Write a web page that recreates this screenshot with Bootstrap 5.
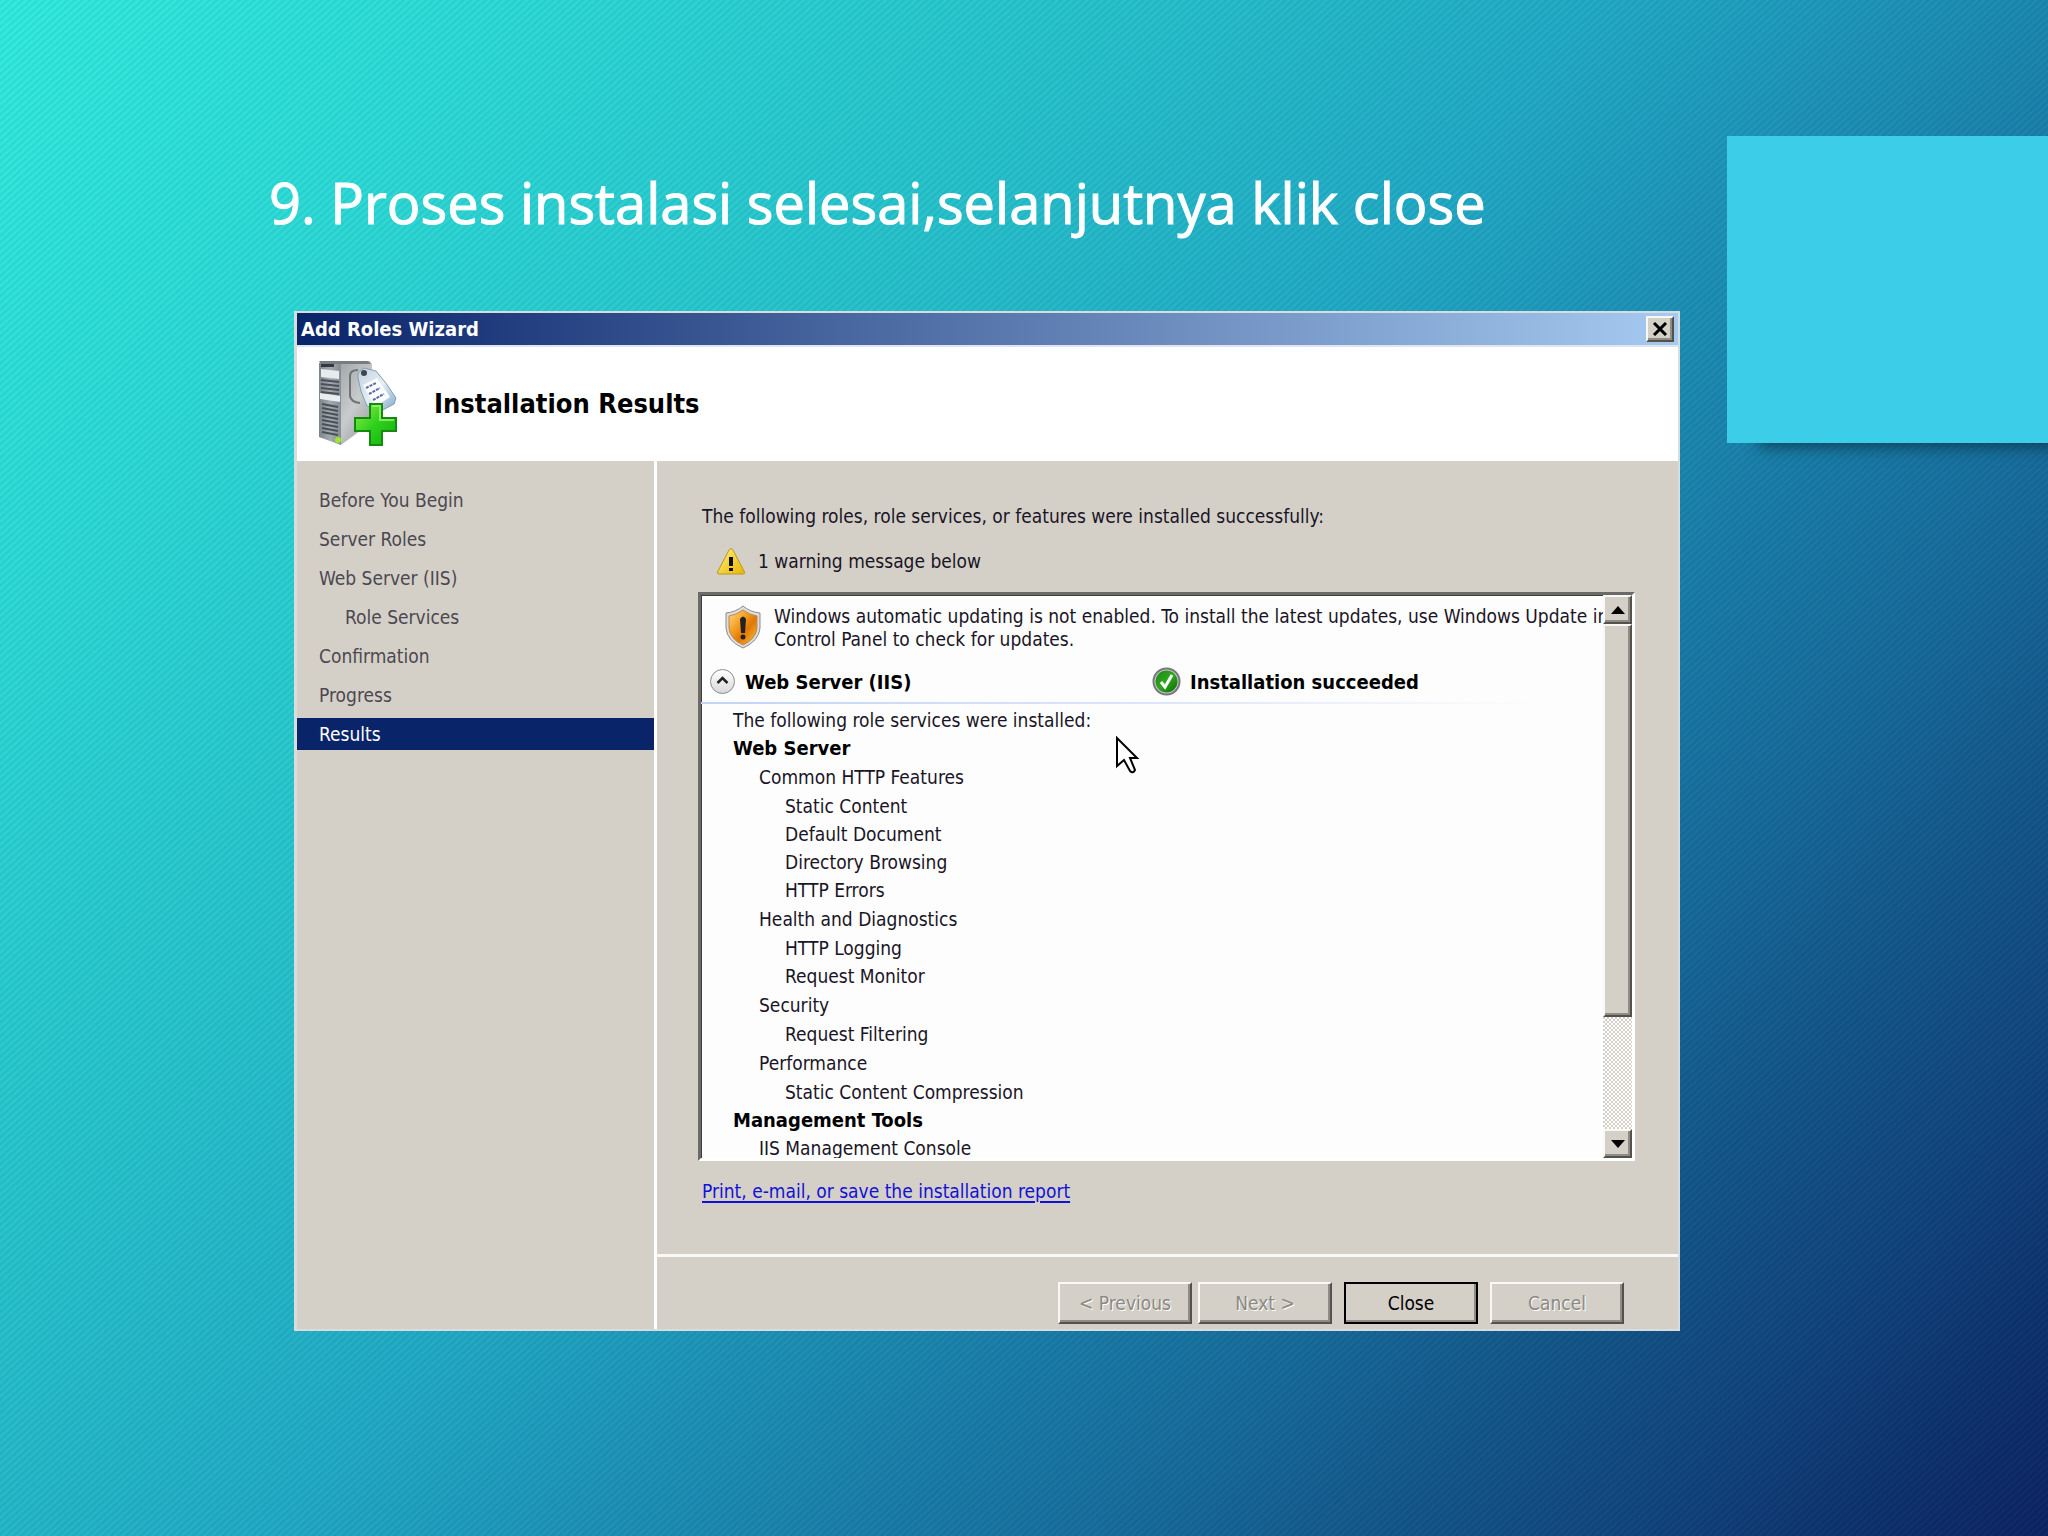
<!DOCTYPE html>
<html lang="id">
<head>
<meta charset="utf-8">
<meta name="viewport" content="width=device-width, initial-scale=1">
<title>Add Roles Wizard</title>
<link href="https://cdn.jsdelivr.net/npm/bootstrap@5.3.0/dist/css/bootstrap.min.css" rel="stylesheet">
<style>
  :root { --face: #d4d0c8; --navy: #0a246a; }
  body {
    min-height: 100vh;
    font-family: "DejaVu Sans Condensed", "DejaVu Sans", sans-serif;
    font-size: 19px;
    line-height: 28px;
    color: #1a1526;
    background:
      repeating-linear-gradient(138deg, rgba(0,80,110,.10) 0, rgba(0,80,110,.02) 2px, rgba(255,255,255,.04) 3px, rgba(0,80,110,.10) 5px),
      linear-gradient(131deg, #30ecde 0%, #2bd8d4 17%, #25c0ca 34%, #20a8c4 48%, #1c92b6 56%, #187ba6 65%, #156898 73%, #125488 80%, #0f4079 88%, #0c2e6a 94%, #0b1f60 100%);
  }
  .slide { grid-template-columns: 269fr 25fr 1386fr 47fr 321fr; grid-template-rows: auto auto; align-items: start; }
  .slide-title {
    grid-area: 1 / 2 / 2 / 4;
    padding: 166px 0 73px;
    font-family: "Open Sans", "Noto Sans", sans-serif;
    font-size: 56px; line-height: 72px; font-weight: 400; color: #fff;
    -webkit-text-stroke: 1px #fff;
  }
  .accent-block { grid-area: 1 / 5 / 3 / 6; margin-top: 136px; height: 307px; background: #3ccde9; box-shadow: 22px 14px 14px -10px rgba(10,50,70,.75); }
  .wizard { grid-area: 2 / 3 / 3 / 4; min-width: 0; background: var(--face); border: 2px solid #d9dcdc; border-left-width: 3px; }
  .title-bar { height: 32px; padding: 0 4px; background: linear-gradient(90deg, #0a246a, #a6caf0); color: #fff; font-size: 20px; }
  .wiz-head { height: 116px; padding: 0 21px; gap: 34px; background: #fff; border-top: 2px solid #dfe4ee; }
  .wiz-head h2 { font-size: 27px; line-height: 32px; color: #000; }
  .steps { flex: 0 0 360px; padding-top: 23px; gap: 7px; border-right: 3px solid #fff; }
  .steps a { line-height: 32px; padding-left: 22px; color: #4c4850; text-decoration: none; }
  .steps a.sub-step { padding-left: 48px; }
  .steps a.current { background: var(--navy); color: #fff; }
  .results { padding: 41px 43px 0 41px; height: 793px; }
  .warn-line { margin: 17px 0; padding-left: 18px; gap: 12px; }
  .report-box { height: 569px; background: #fdfdfd; border: 3px solid; border-color: #6c6a66 #fff #fff #6c6a66; box-shadow: inset 1px 1px 0 #403e3c; }
  .report-text { white-space: nowrap; }
  .notice { padding: 10px 0 0 24px; gap: 13px; line-height: 23px; }
  .role-head { margin-top: 14px; padding: 0 8px 4px; height: 37px; font-size: 20px; font-weight: 700; color: #000; }
  .role-head > div { gap: 9px; flex: 0 0 50%; }
  .fade-rule { height: 2px; margin-right: 68px; background: linear-gradient(90deg, #c2d4f6, #dfe8fa 60%, #fdfdfd); }
  .role-list { padding: 2px 0 0 32px; }
  .role-list ul { list-style: none; margin: 0; padding-left: 26px; }
  .role-list h3 { margin: 0; font-size: 20px; line-height: 28px; font-weight: 700; color: #000; }
  .role-list .feature-name { line-height: 30px; }
  .pointer { left: 415px; top: 141px; }
  .scroll-bar { flex: 0 0 29px; background: repeating-conic-gradient(#d4d0c8 0 25%, #fff 0 50%) 0 0 / 4px 4px; }
  .raised { background: var(--face); border: 2px solid; border-color: #f8f8f6 #55524e #55524e #f8f8f6; border-radius: 0; padding: 0; color: #000; box-shadow: inset -2px -2px 0 #8f8c86; }
  .scroll-bar .raised { height: 29px; }
  .scroll-bar .thumb { height: 393px; }
  .title-bar .raised { width: 28px; height: 26px; }
  .report-link { margin-top: 16px; color: #1111d8; text-underline-offset: 3px; text-decoration-thickness: 2px; }
  .wiz-foot { border-top: 3px solid #faf9f6; padding: 25px 54px 5px 0; gap: 12px; }
  .wiz-foot .pager { gap: 6px; }
  .wiz-foot .raised { width: 134px; height: 42px; font-size: 19px; line-height: 36px; }
  .wiz-foot .raised:disabled { color: #8c8984; text-shadow: 1px 1px 0 #fff; opacity: 1; }
  .wiz-foot .default-btn { outline: 2px solid #000; outline-offset: -2px; }
</style>
<script src="https://cdn.jsdelivr.net/npm/bootstrap@5.3.0/dist/js/bootstrap.bundle.min.js" defer></script>
</head>
<body>
<main class="slide d-grid overflow-hidden">
  <h1 class="slide-title m-0">9. Proses instalasi selesai,selanjutnya klik close</h1>
  <div class="accent-block"></div>

  <section class="wizard" aria-label="Add Roles Wizard">
    <header class="title-bar d-flex align-items-center justify-content-between">
      <span class="fw-bold">Add Roles Wizard</span>
      <button type="button" class="raised d-flex align-items-center justify-content-center" aria-label="Close window">
        <svg width="16" height="14" viewBox="0 0 16 14" stroke="#000" stroke-width="3"><path d="M2 1 14 13M14 1 2 13"/></svg>
      </button>
    </header>

    <div class="wiz-head d-flex align-items-center">
      <svg width="82" height="88" viewBox="0 0 82 88" aria-hidden="true">
        <defs>
          <linearGradient id="front" x1="0" y1="0" x2="1" y2="0"><stop offset="0" stop-color="#7c848b"/><stop offset=".5" stop-color="#a3aab0"/><stop offset="1" stop-color="#858c93"/></linearGradient>
          <linearGradient id="side" x1="0" y1="0" x2="1" y2="1"><stop offset="0" stop-color="#8d9497"/><stop offset=".6" stop-color="#c9cccd"/><stop offset="1" stop-color="#8e9394"/></linearGradient>
          <linearGradient id="tag" x1="0" y1="0" x2="1" y2="1"><stop offset="0" stop-color="#c3d0dc"/><stop offset=".5" stop-color="#e4eef6"/><stop offset="1" stop-color="#83aac9"/></linearGradient>
          <linearGradient id="plus" x1="0" y1="0" x2="1" y2="1"><stop offset="0" stop-color="#8ef04a"/><stop offset=".5" stop-color="#2fd01c"/><stop offset="1" stop-color="#0fae0c"/></linearGradient>
        </defs>
        <path d="M1 3 10 1H52L54 4V62L23 85 20 83Z" fill="url(#side)"/>
        <path d="M1 3H23V85L1 77Z" fill="url(#front)"/>
        <path d="M1 1H50L53 4H3Z" fill="#777d80"/>
        <path d="M3 9 21 11V19L3 17Z" fill="#e6ebee"/>
        <path d="M3 4H16V7H3Z" fill="#33383c"/>
        <path d="M2 33 22 36V42L2 39Z" fill="#e9eef0"/>
        <path d="M3 20 21 22M3 24 21 26M3 28 21 30M3 32 21 34M4 44 20 47M4 48 20 51M4 52 20 55M4 56 20 59M4 60 20 63M4 64 20 67M4 68 20 71M4 72 20 75" stroke="#4a5058" stroke-width="2"/>
        <circle cx="20" cy="80" r="3" fill="#9bea25"/>
        <path d="M40 10Q32 10 32 16V36Q33 42 42 43" fill="none" stroke="#6d7376" stroke-width="2"/>
        <path d="M40 13 46 8 58 11Q68 22 78 38L76 44 63 51 49 46Q42 32 40 18Z" fill="url(#tag)" stroke="#7f9fb8"/>
        <path d="M45 25 59 18 72 37 57 47Z" fill="#fbfdff"/>
        <path d="M48 28 58 23M51 34 62 28M55 40 66 34" stroke="#596c9c" stroke-width="2" stroke-dasharray="3 1"/>
        <circle cx="46" cy="13" r="3" fill="#40454a"/>
        <path d="M52 44H64V58H78V71H64V85H52V71H37V58H52Z" fill="url(#plus)" stroke="#168a10" stroke-width="2"/>
        <path d="M54 46H62V60H76" fill="none" stroke="#a8f57c" stroke-width="2" opacity=".7"/>
      </svg>
      <h2 class="fw-bold m-0">Installation Results</h2>
    </div>

    <div class="d-flex">
      <nav class="steps d-flex flex-column" aria-label="Steps">
        <a href="#">Before You Begin</a>
        <a href="#">Server Roles</a>
        <a href="#">Web Server (IIS)</a>
        <a href="#" class="sub-step">Role Services</a>
        <a href="#">Confirmation</a>
        <a href="#">Progress</a>
        <a href="#" class="current" aria-current="step">Results</a>
      </nav>

      <div class="flex-grow-1 overflow-hidden">
        <div class="results">
          <div class="ps-1">The following roles, role services, or features were installed successfully:</div>
          <div class="warn-line d-flex align-items-center">
            <svg width="30" height="28" viewBox="0 0 30 28" aria-hidden="true"><defs><linearGradient id="yel" x1="0" y1="0" x2="1" y2="1"><stop offset="0" stop-color="#fff27a"/><stop offset="1" stop-color="#e9b400"/></linearGradient></defs><path d="M15 1.500Q16.500 1.500 17.500 4L28.500 25Q29 27 27 27H3Q1 27 1.500 25L12.500 4Q13.500 1.500 15 1.500Z" fill="url(#yel)" stroke="#b9962a"/><path d="M13 10H17V19H13ZM13 21H17V24H13Z" fill="#111"/></svg>
            <span>1 warning message below</span>
          </div>

          <div class="report-box d-flex position-relative">
            <div class="report-text flex-grow-1 overflow-hidden">
              <div class="notice d-flex">
                <svg class="flex-shrink-0" width="36" height="44" viewBox="0 0 36 44" aria-hidden="true"><defs><linearGradient id="orng" x1="0" y1="0" x2="1" y2="1"><stop offset="0" stop-color="#ffd98a"/><stop offset=".4" stop-color="#f39a1c"/><stop offset=".6" stop-color="#e07708"/><stop offset="1" stop-color="#ffc53a"/></linearGradient></defs><path d="M18 1Q25 7 35 8V23Q34 36 18 43 2 36 1 23V8Q11 7 18 1Z" fill="#dedede" stroke="#8b8b8b"/><path d="M18 5Q25 10 32 11V23Q31 34 18 40 5 34 4 23V11Q11 10 18 5Z" fill="url(#orng)" stroke="#b9894a"/><path d="M15 14Q18 9 21 14L20 28H16Z" fill="#222"/><circle cx="18" cy="32" r="2.500" fill="#222"/></svg>
                <span>Windows automatic updating is not enabled. To install the latest updates, use Windows Update in<br>Control Panel to check for updates.</span>
              </div>
              <div class="role-head d-flex">
                <div class="d-flex align-items-center">
                  <svg width="27" height="27" viewBox="0 0 27 27" aria-hidden="true"><defs><linearGradient id="gry" x1="0" y1="0" x2="0" y2="1"><stop offset="0" stop-color="#fff"/><stop offset="1" stop-color="#d8d8d8"/></linearGradient></defs><circle cx="13.500" cy="13.500" r="12" fill="url(#gry)" stroke="#8c8c8c"/><path d="M8.500 15 13.500 10 18.500 15" fill="none" stroke="#222" stroke-width="2.500"/></svg>
                  <span>Web Server (IIS)</span>
                </div>
                <div class="d-flex align-items-center">
                  <svg width="29" height="29" viewBox="0 0 29 29" aria-hidden="true"><defs><linearGradient id="grn" x1="0" y1="0" x2="1" y2="1"><stop offset="0" stop-color="#1c8a14"/><stop offset=".5" stop-color="#2ea51e"/><stop offset="1" stop-color="#0b6a08"/></linearGradient></defs><circle cx="14.500" cy="14.500" r="13" fill="#c9c9cc" stroke="#77777c" stroke-width="2"/><circle cx="14.500" cy="14.500" r="11" fill="url(#grn)"/><path d="M9 15 13 20 20 8" fill="none" stroke="#fff" stroke-width="3"/></svg>
                  <span>Installation succeeded</span>
                </div>
              </div>
              <div class="fade-rule"></div>
              <div class="role-list">
                <div>The following role services were installed:</div>
                <h3>Web Server</h3>
                <ul>
                  <li><div class="feature-name">Common HTTP Features</div>
                    <ul><li>Static Content</li><li>Default Document</li><li>Directory Browsing</li><li>HTTP Errors</li></ul></li>
                  <li><div class="feature-name">Health and Diagnostics</div>
                    <ul><li>HTTP Logging</li><li>Request Monitor</li></ul></li>
                  <li><div class="feature-name">Security</div>
                    <ul><li>Request Filtering</li></ul></li>
                  <li><div class="feature-name">Performance</div>
                    <ul><li>Static Content Compression</li></ul></li>
                </ul>
                <h3>Management Tools</h3>
                <ul><li>IIS Management Console</li></ul>
              </div>
            </div>
            <div class="scroll-bar d-flex flex-column">
              <button type="button" class="raised d-flex align-items-center justify-content-center" aria-label="Scroll up"><svg width="14" height="8" viewBox="0 0 14 8"><path d="M7 0 14 8H0Z"/></svg></button>
              <div class="raised thumb"></div>
              <button type="button" class="raised d-flex align-items-center justify-content-center mt-auto" aria-label="Scroll down"><svg width="14" height="8" viewBox="0 0 14 8"><path d="M0 0H14L7 8Z"/></svg></button>
            </div>
            <svg class="pointer position-absolute" width="24" height="38" viewBox="0 0 24 38" aria-hidden="true"><path d="M1 2V30L8 24 14 35Q17 38 19 34L14 22H21Z" fill="#fff" stroke="#000" stroke-width="2"/></svg>
          </div>

          <a href="#" class="report-link d-inline-block ms-1">Print, e-mail, or save the installation report</a>
        </div>

        <footer class="wiz-foot d-flex justify-content-end">
          <div class="pager d-flex">
            <button type="button" class="raised" disabled>&lt; Previous</button>
            <button type="button" class="raised" disabled>Next &gt;</button>
          </div>
          <button type="button" class="raised default-btn">Close</button>
          <button type="button" class="raised" disabled>Cancel</button>
        </footer>
      </div>
    </div>
  </section>
</main>
</body>
</html>
